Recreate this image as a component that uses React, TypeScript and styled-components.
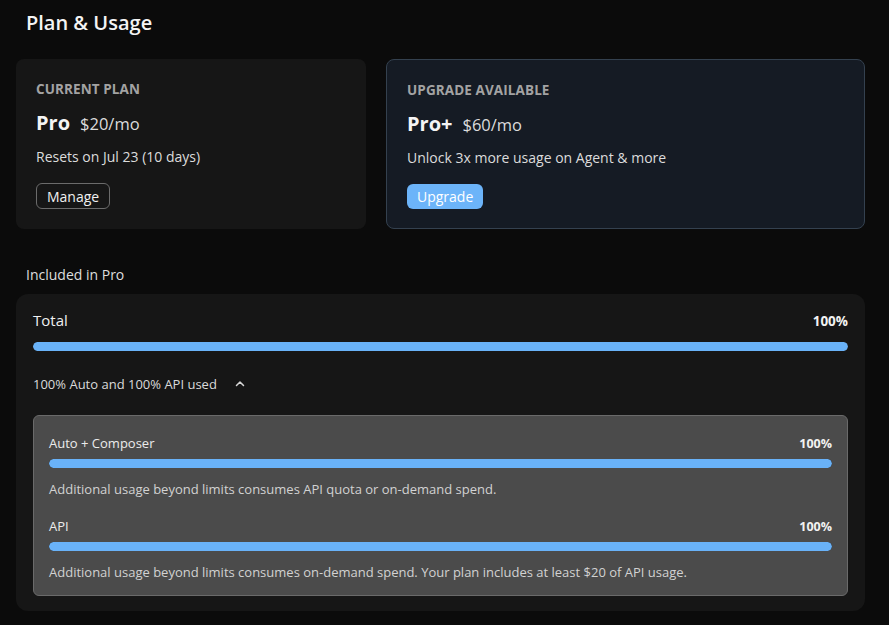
import styled, { createGlobalStyle } from 'styled-components';

const GlobalStyle = createGlobalStyle`
  html, body {
    margin: 0;
    padding: 0;
    background: #0b0b0b;
  }
  body {
    font-family: "Open Sans", "Noto Sans", sans-serif;
    color: #e6e6e6;
  }
`;

const usage = [
  {
    name: 'Auto + Composer',
    percent: 100,
    note: 'Additional usage beyond limits consumes API quota or on-demand spend.',
  },
  {
    name: 'API',
    percent: 100,
    note: 'Additional usage beyond limits consumes on-demand spend. Your plan includes at least $20 of API usage.',
  },
];

function ChevronUp() {
  return (
    <svg width="12" height="12" viewBox="0 0 12 12" fill="none">
      <path d="M2.5 7.5L6 4L9.5 7.5" stroke="#d6d6d6" strokeWidth="1.5" strokeLinecap="round" strokeLinejoin="round" />
    </svg>
  );
}

export default function App() {
  return (
    <Page>
      <GlobalStyle />
      <Title>Plan &amp; Usage</Title>

      <Cards>
        <Card>
          <Eyebrow>CURRENT PLAN</Eyebrow>
          <PlanRow>
            <PlanName>Pro</PlanName>
            <Price>$20/mo</Price>
          </PlanRow>
          <Info>Resets on Jul 23 (10 days)</Info>
          <OutlineButton>Manage</OutlineButton>
        </Card>
        <Card $highlight>
          <Eyebrow>UPGRADE AVAILABLE</Eyebrow>
          <PlanRow>
            <PlanName>Pro+</PlanName>
            <Price>$60/mo</Price>
          </PlanRow>
          <Info>Unlock 3x more usage on Agent &amp; more</Info>
          <SolidButton>Upgrade</SolidButton>
        </Card>
      </Cards>

      <SectionLabel>Included in Pro</SectionLabel>

      <Panel>
        <MeterHead>
          <TotalLabel>Total</TotalLabel>
          <Percent>100%</Percent>
        </MeterHead>
        <Track>
          <Fill style={{ width: '100%' }} />
        </Track>

        <Toggle>
          100% Auto and 100% API used
          <ChevronUp />
        </Toggle>

        <Breakdown>
          {usage.map((u) => (
            <Item key={u.name}>
              <MeterHead>
                <ItemLabel>{u.name}</ItemLabel>
                <Percent $small>{u.percent}%</Percent>
              </MeterHead>
              <Track $small>
                <Fill style={{ width: `${u.percent}%` }} />
              </Track>
              <Note>{u.note}</Note>
            </Item>
          ))}
        </Breakdown>
      </Panel>
    </Page>
  );
}

const Page = styled.div`
  width: 889px;
  height: 625px;
  box-sizing: border-box;
  padding: 9px 24px 0 16px;
  overflow: hidden;
`;

const Title = styled.h1`
  margin: 0 0 0 10px;
  font-size: 20px;
  font-weight: 600;
  line-height: 28px;
  color: #f4f4f4;
`;

const Cards = styled.div`
  display: grid;
  grid-template-columns: 350px 1fr;
  gap: 20px;
  margin-top: 22px;
`;

const Card = styled.div<{ $highlight?: boolean }>`
  height: 170px;
  box-sizing: border-box;
  padding: 21px 20px 0;
  border-radius: 8px;
  background: ${(p) => (p.$highlight ? '#151b24' : '#161616')};
  border: ${(p) => (p.$highlight ? '1px solid #34414f' : 'none')};
`;

const Eyebrow = styled.div`
  font-size: 13.5px;
  font-weight: 700;
  letter-spacing: 0.1px;
  color: #a3a3a3;
  line-height: 18px;
`;

const PlanRow = styled.div`
  display: flex;
  align-items: baseline;
  gap: 10px;
  margin-top: 11px;
`;

const PlanName = styled.span`
  font-size: 20px;
  font-weight: 700;
  color: #f4f4f4;
  line-height: 28px;
`;

const Price = styled.span`
  font-size: 16.5px;
  color: #dcdcdc;
`;

const Info = styled.div`
  margin-top: 10px;
  font-size: 14px;
  color: #dcdcdc;
  line-height: 20px;
`;

const OutlineButton = styled.button`
  margin-top: 16px;
  height: 26px;
  padding: 0 10px;
  border-radius: 6px;
  border: 1px solid #6b6b6b;
  background: transparent;
  color: #f0f0f0;
  font-family: inherit;
  font-size: 14px;
`;

const SolidButton = styled(OutlineButton)`
  height: 25px;
  border: none;
  background: #6cb4f9;
  color: #ffffff;
`;

const SectionLabel = styled.div`
  margin: 36px 0 0 10px;
  font-size: 14px;
  color: #dedede;
  line-height: 20px;
`;

const Panel = styled.div`
  margin-top: 9px;
  height: 317px;
  box-sizing: border-box;
  padding: 16px 17px 0;
  border-radius: 12px;
  background: #161616;
`;

const MeterHead = styled.div`
  display: flex;
  justify-content: space-between;
  align-items: baseline;
`;

const TotalLabel = styled.span`
  font-size: 15px;
  color: #f0f0f0;
  line-height: 20px;
`;

const ItemLabel = styled.span`
  font-size: 13px;
  color: #ebebeb;
  line-height: 18px;
`;

const Percent = styled.span<{ $small?: boolean }>`
  font-size: ${(p) => (p.$small ? '12.5px' : '13.5px')};
  font-weight: 700;
  color: #f2f2f2;
`;

const Track = styled.div<{ $small?: boolean }>`
  margin-top: ${(p) => (p.$small ? '7px' : '12px')};
  height: 9px;
  border-radius: 5px;
  background: #2c2c2c;
  overflow: hidden;
`;

const Fill = styled.div`
  height: 100%;
  border-radius: 5px;
  background: #69b2f8;
`;

const Toggle = styled.div`
  display: flex;
  align-items: center;
  gap: 17px;
  margin-top: 24px;
  font-size: 13px;
  color: #dadada;
  line-height: 18px;
`;

const Breakdown = styled.div`
  margin-top: 22px;
  height: 181px;
  box-sizing: border-box;
  padding: 18px 15px 0;
  border: 1px solid #6a6a6a;
  border-radius: 6px;
  background: #4b4b4b;
  display: flex;
  flex-direction: column;
  gap: 19px;
`;

const Item = styled.div``;

const Note = styled.div`
  margin-top: 12px;
  font-size: 13px;
  color: #d2d2d2;
  line-height: 18px;
`;
